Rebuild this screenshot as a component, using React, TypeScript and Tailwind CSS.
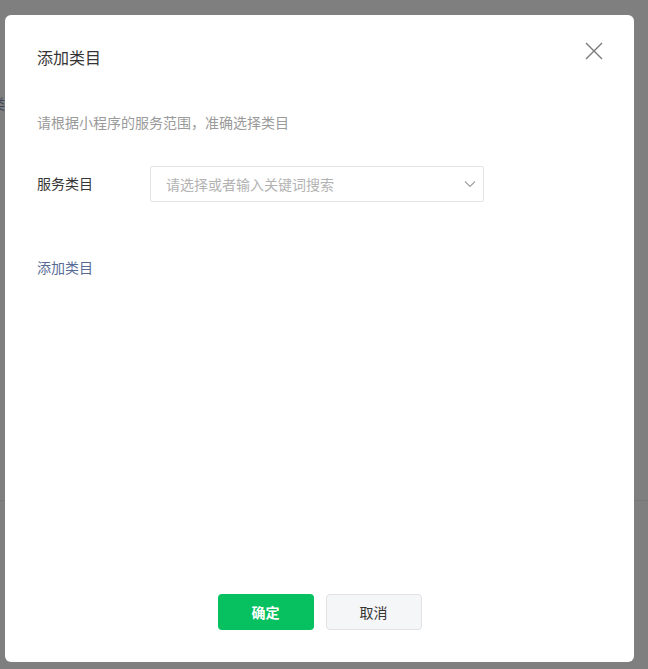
import React from "react";

export default function App() {
  const font = { fontFamily: '"Noto Sans CJK SC", "Noto Sans", sans-serif' };
  return (
    <div className="relative h-[669px] w-[648px] overflow-hidden bg-[#7f7f7f]" style={font}>
      {/* underlying dimmed page */}
      <div className="absolute left-[-9px] top-[93px] text-[14px] leading-[20px] text-[#3c4154]">类</div>
      <div className="absolute left-0 right-0 top-[500px] h-px bg-[#767676]" />

      {/* modal */}
      <div className="absolute left-[5px] top-[15px] flex h-[647px] w-[629px] flex-col rounded-[6px] bg-white pl-[32px] pr-[31px] pt-[31px] pb-[32px]">
        <div className="flex items-start justify-between">
          <div className="text-[16px] leading-[22px] text-[#353535]">添加类目</div>
          <button className="mt-[-4px] h-[18px] w-[18px] text-[#7a7a7a]" aria-label="close">
            <svg viewBox="0 0 18 18" width="18" height="18" fill="none" stroke="currentColor" strokeWidth="1.4">
              <path d="M1 1L17 17M17 1L1 17" />
            </svg>
          </button>
        </div>

        <div className="mt-[44px] text-[14px] leading-[20px] text-[#9a9a9a]">
          请根据小程序的服务范围，准确选择类目
        </div>

        <div className="mt-[34px] flex items-center">
          <div className="mb-[3px] w-[113px] text-[14px] leading-[20px] text-[#353535]">服务类目</div>
          <div className="flex h-[36px] w-[334px] items-center justify-between rounded-[2px] border border-[#e4e4e4] pl-[15px] pr-[7px]">
            <span className="mb-[1px] text-[14px] leading-[20px] text-[#b2b2b2]">请选择或者输入关键词搜索</span>
            <svg viewBox="0 0 12 8" width="12" height="8" fill="none" stroke="#a0a0a0" strokeWidth="1.1">
              <path d="M1 1.5L6 6.5L11 1.5" />
            </svg>
          </div>
        </div>

        <div className="mt-[55px] text-[14px] leading-[20px] text-[#576b95]">添加类目</div>

        <div className="flex-1" />

        <div className="flex justify-center gap-[12px] pr-[1px]">
          <button className="h-[36px] w-[96px] rounded-[4px] bg-[#07c160] text-[14px] font-bold text-white">
            确定
          </button>
          <button className="h-[36px] w-[96px] rounded-[4px] border border-[#e2e2e4] bg-[#f5f6f8] text-[14px] text-[#353535]">
            取消
          </button>
        </div>
      </div>
    </div>
  );
}
